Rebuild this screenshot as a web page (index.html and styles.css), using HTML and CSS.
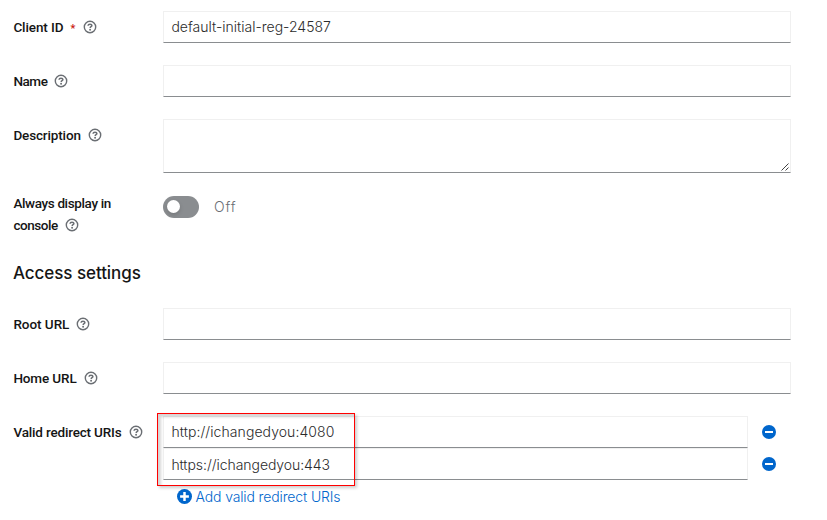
FILE: index.html
```
<!DOCTYPE html>
<html lang="en">
<head>
<meta charset="utf-8">
<title>Client settings</title>
<link rel="stylesheet" href="styles.css">
</head>
<body>
<svg class="defs" aria-hidden="true">
  <symbol id="help" viewBox="0 0 14 14">
    <circle cx="7" cy="7" r="5.7" fill="none" stroke="currentColor" stroke-width="1.4"/>
    <path d="M5 5.7C5.1 4.6 6 4.2 7 4.2c1.1 0 1.9.6 1.9 1.4 0 1.1-1.7 1.1-1.7 2.3" fill="none" stroke="currentColor" stroke-width="1.5"/>
    <circle cx="7.1" cy="9.8" r=".95" fill="currentColor"/>
  </symbol>
  <symbol id="minus" viewBox="0 0 14 14">
    <circle cx="7" cy="7" r="7" fill="currentColor"/>
    <rect x="3" y="6" width="8" height="2" fill="#fff"/>
  </symbol>
  <symbol id="plus" viewBox="0 0 14 14">
    <circle cx="7" cy="7" r="7" fill="currentColor"/>
    <path d="M7 2.9v8.2M2.9 7h8.2" stroke="#fff" stroke-width="2.3"/>
  </symbol>
</svg>
<form class="form">
  <div class="row">
    <div class="label"><span class="t-client">Client ID</span><span class="required">*</span><svg class="help help-client"><use href="#help"/></svg></div>
    <div class="field v-client">default-initial-reg-24587</div>
  </div>
  <div class="row">
    <div class="label"><span class="t-name">Name</span><svg class="help"><use href="#help"/></svg></div>
    <div class="field"></div>
  </div>
  <div class="row">
    <div class="label"><span class="t-desc">Description</span><svg class="help"><use href="#help"/></svg></div>
    <div class="field area"><svg class="grip" viewBox="0 0 8 8"><path d="M.5 7.5l7-7M4.5 7.5l3-3" stroke="#444" stroke-width="1"/></svg></div>
  </div>
  <div class="row row-toggle">
    <div class="label"><span class="t-always">Always display in</span><br><span class="t-console">console</span><svg class="help"><use href="#help"/></svg></div>
    <div class="switch"><span class="track"></span><span class="off">Off</span></div>
  </div>
  <h2>Access settings</h2>
  <div class="row">
    <div class="label"><span class="t-root">Root URL</span><svg class="help"><use href="#help"/></svg></div>
    <div class="field"></div>
  </div>
  <div class="row">
    <div class="label"><span class="t-home">Home URL</span><svg class="help"><use href="#help"/></svg></div>
    <div class="field"></div>
  </div>
  <div class="row">
    <div class="label"><span class="t-valid">Valid redirect URIs</span><svg class="help"><use href="#help"/></svg></div>
    <div class="uris">
      <div class="uri"><div class="field v-http">http://ichangedyou:4080</div><svg class="remove"><use href="#minus"/></svg></div>
      <div class="uri"><div class="field v-https">https://ichangedyou:443</div><svg class="remove"><use href="#minus"/></svg></div>
      <div class="add"><svg class="plus"><use href="#plus"/></svg><span>Add valid redirect URIs</span></div>
      <div class="highlight"></div>
    </div>
  </div>
</form>
</body>
</html>
```
FILE: styles.css
```
* { box-sizing: border-box; }
body { margin: 0; background: #fff; color: #151515; font: 14px/21px Inter, sans-serif; overflow: hidden; }
.defs { position: absolute; width: 0; height: 0; }
.form { padding: 11px 36px 0 13px; }
.row { display: grid; grid-template-columns: 150px 1fr; margin-bottom: 22px; }
.label { font: 500 13.5px/22px Roboto, sans-serif; padding-top: 5px; padding-left: .4px; white-space: nowrap; }
.help { width: 14px; height: 14px; margin-left: 7px; vertical-align: -2px; color: #6a6e73; }
.required { color: #c9190b; font-size: 11px; margin-left: 7px; }
.help-client { margin-left: 8px; }
.field { height: 32px; border: 1px solid #f0f0f0; border-bottom-color: #8a8d90; padding: 4px 7.4px; background: #fff; color: #2b2b2b; font-weight: 350; white-space: nowrap; }
.area { height: 54px; display: flex; justify-content: flex-end; align-items: flex-end; padding: 0 1px 1px; }
.grip { width: 8px; height: 8px; }
.row-toggle { margin: 0; }
.row-toggle .label { padding-top: 0; margin-top: -3px; }
.switch { display: flex; align-items: flex-start; padding-top: 1px; color: #6a6e73; font-weight: 350; }
.track { width: 36px; height: 22px; border-radius: 11px; background: #8a8d90; padding: 4px; }
.track::before { content: ""; display: block; width: 13px; height: 13px; border-radius: 50%; background: #fff; box-shadow: 0 2px 4px rgba(3, 3, 3, .15); }
.off { margin-left: 15px; letter-spacing: .9px; }
h2 { font: 500 17px/24px Inter, sans-serif; letter-spacing: -.07px; margin: 25px 0 23px; }
.uris { position: relative; }
.uri { display: flex; align-items: center; height: 32px; }
.uri .field { width: 585px; }
.uri .v-https { padding-top: 5px; }
.remove { width: 14px; height: 14px; margin-left: 14px; color: #06c; }
.add { display: flex; align-items: center; height: 33px; padding-left: 14px; color: #06c; font-weight: 350; letter-spacing: -.13px; }
.plus { width: 15px; height: 15px; margin-right: 3.5px; }
.highlight { position: absolute; left: -6px; top: -3px; width: 198px; height: 73px; border: 1px solid #f00; box-shadow: 2px 2px 3px rgba(0, 0, 0, .2), inset 3px 3px 3px rgba(0, 0, 0, .17); }
.t-client { letter-spacing: -.1px; }
.t-name { letter-spacing: -.45px; }
.t-desc { letter-spacing: -.14px; }
.t-always { letter-spacing: -.36px; }
.t-console { letter-spacing: -.43px; }
.t-root { letter-spacing: -.04px; }
.t-home { letter-spacing: -.13px; }
.t-valid { letter-spacing: -.17px; }
.v-client { letter-spacing: 0; }
.v-http { letter-spacing: .07px; }
.v-https { letter-spacing: -.06px; }
```
